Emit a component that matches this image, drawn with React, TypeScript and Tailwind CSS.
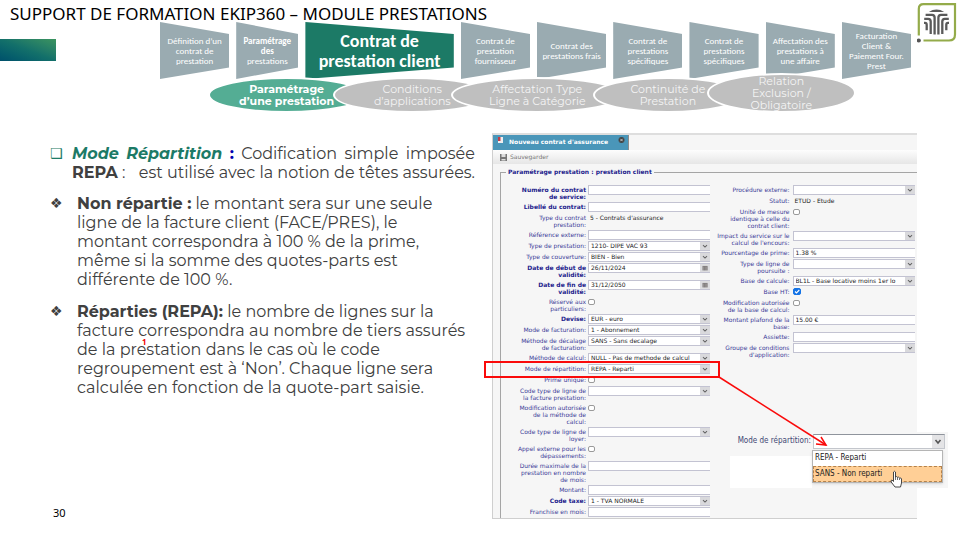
import React from "react";
import clsx from "clsx";

type Kind = "text" | "select" | "date" | "check" | "static";
type Field = {
  id: string;
  label: string;
  kind: Kind;
  value?: string;
  bold?: boolean;
  checked?: boolean;
  lines?: 1 | 2 | 3;
};

const MONT = "font-[Montserrat,Inter,'Open_Sans',sans-serif]";
const VERD = "font-['DejaVu_Sans',sans-serif]";

const leftFields: Field[] = [
  { id: "numero", label: "Numéro du contrat\nde service:", kind: "text", bold: true, lines: 2 },
  { id: "libelle", label: "Libellé du contrat:", kind: "text", bold: true },
  { id: "typecontrat", label: "Type du contrat\nprestation:", kind: "static", value: "5 - Contrats d'assurance", lines: 2 },
  { id: "reference", label: "Référence externe:", kind: "text" },
  { id: "typeprest", label: "Type de prestation:", kind: "select", value: "1210- DIPE VAC 93" },
  { id: "couverture", label: "Type de couverture:", kind: "select", value: "BIEN - Bien" },
  { id: "debut", label: "Date de début de\nvalidité:", kind: "date", value: "26/11/2024", bold: true, lines: 2 },
  { id: "fin", label: "Date de fin de\nvalidité:", kind: "date", value: "31/12/2050", bold: true, lines: 2 },
  { id: "reserve", label: "Réservé aux\nparticuliers:", kind: "check", lines: 2 },
  { id: "devise", label: "Devise:", kind: "select", value: "EUR - euro", bold: true },
  { id: "facturation", label: "Mode de facturation:", kind: "select", value: "1 - Abonnement" },
  { id: "decalage", label: "Méthode de décalage\nde facturation:", kind: "select", value: "SANS - Sans decalage", lines: 2 },
  { id: "calcul", label: "Méthode de calcul:", kind: "select", value: "NULL - Pas de methode de calcul" },
  { id: "repartition", label: "Mode de répartition:", kind: "select", value: "REPA - Reparti" },
  { id: "prime", label: "Prime unique:", kind: "check" },
  { id: "ligne", label: "Code type de ligne de\nla facture prestation:", kind: "select", lines: 2 },
  { id: "modif", label: "Modification autorisée\nde la méthode de\ncalcul:", kind: "check", lines: 3 },
  { id: "loyer", label: "Code type de ligne de\nloyer:", kind: "select", lines: 2 },
  { id: "appel", label: "Appel externe pour les\ndépassements:", kind: "check", lines: 2 },
  { id: "duree", label: "Durée maximale de la\nprestation en nombre\nde mois:", kind: "text", lines: 3 },
  { id: "montant", label: "Montant:", kind: "text" },
  { id: "taxe", label: "Code taxe:", kind: "select", value: "1 - TVA NORMALE", bold: true },
  { id: "franchise", label: "Franchise en mois:", kind: "text" },
];

const rightFields: Field[] = [
  { id: "procedure", label: "Procédure externe:", kind: "select" },
  { id: "statut", label: "Statut:", kind: "static", value: "ETUD - Etude" },
  { id: "unite", label: "Unité de mesure\nidentique à celle du\ncontrat client:", kind: "check", lines: 3 },
  { id: "impact", label: "Impact du service sur le\ncalcul de l'encours:", kind: "select", lines: 2 },
  { id: "pourcentage", label: "Pourcentage de prime:", kind: "text", value: "1.38 %" },
  { id: "poursuite", label: "Type de ligne de\npoursuite :", kind: "select", lines: 2 },
  { id: "base", label: "Base de calcule:", kind: "select", value: "BL1L - Base locative moins 1er lo" },
  { id: "baseht", label: "Base HT:", kind: "check", checked: true },
  { id: "modifbase", label: "Modification autorisée\nde la base de calcul:", kind: "check", lines: 2 },
  { id: "plafond", label: "Montant plafond de la\nbase:", kind: "text", value: "15.00 €", lines: 2 },
  { id: "assiette", label: "Assiette:", kind: "text" },
  { id: "groupe", label: "Groupe de conditions\nd'application:", kind: "select", lines: 2 },
];

function Chevron() {
  return (
    <svg viewBox="0 0 10 10" className="h-full w-[10px] shrink-0 bg-[#d9d9dc]" aria-hidden="true">
      <path d="M2.5 4 L5 6.3 L7.5 4" fill="none" stroke="#666" strokeWidth="1.4" />
    </svg>
  );
}

function CalendarMark() {
  return (
    <svg viewBox="0 0 10 10" className="h-full w-[10px] shrink-0 bg-[#dcdcdf]" aria-hidden="true">
      <path d="M2 3h6v5H2z" fill="#a9a6a6" />
      <path d="M2 3h6M2.5 3v5M4.3 3v5M6 3v5M7.7 3v5" stroke="#6e6a6a" strokeWidth=".8" />
    </svg>
  );
}

function Control({ field }: { field: Field }) {
  const text = "min-w-0 flex-1 bg-transparent pl-[2px] text-[6px] leading-[8px] text-[#1c1c1c] outline-none";
  if (field.kind === "static") {
    return <output id={field.id} className="block pl-[2px] pt-[1px] text-[6px] leading-[7px] whitespace-nowrap text-[#1c1c1c]">{field.value}</output>;
  }
  if (field.kind === "check") {
    return (
      <span className="flex h-[9px] items-center">
        <input
          id={field.id}
          type="checkbox"
          defaultChecked={field.checked}
          className="peer h-[6px] w-[7px] appearance-none rounded-[2px] border border-[#9a9a9a] bg-white checked:h-[7px] checked:w-[8px] checked:border-[#1473e6] checked:bg-[#1473e6]"
        />
        <svg viewBox="0 0 8 7" className="-ml-2 hidden h-[7px] w-2 peer-checked:block" aria-hidden="true">
          <path d="M2 3.5 L3.5 5 L6.3 2" fill="none" stroke="#fff" strokeWidth="1.1" />
        </svg>
      </span>
    );
  }
  return (
    <div className="flex h-[10px] border border-r-0 border-[#c3c3d2] bg-white">
      {field.kind === "select" ? (
        <select id={field.id} className={clsx(text, "appearance-none")} defaultValue={field.value ?? ""}>
          <option>{field.value ?? ""}</option>
        </select>
      ) : (
        <input id={field.id} type="text" className={text} defaultValue={field.value ?? ""} />
      )}
      {field.kind === "select" && <Chevron />}
      {field.kind === "date" && <CalendarMark />}
    </div>
  );
}

function Fields({ items, right }: { items: Field[]; right?: boolean }) {
  return (
    <div className={clsx("min-w-0", right ? "flex-[206] pr-[2px]" : "flex-[209]")}>
      {items.map((f) => (
        <div
          key={f.id}
          className={clsx(
            "grid",
            right ? "grid-cols-[80px_1fr] gap-x-[3px]" : "grid-cols-[85px_1fr] gap-x-[2px]",
            f.lines === 3 ? "h-6" : f.lines === 2 ? "h-[17px]" : "h-[11px]"
          )}
        >
          <label
            htmlFor={f.id}
            className={clsx(
              "flex flex-col items-end pt-[1px] text-[6px] leading-[7px] whitespace-nowrap",
              f.bold ? "font-bold text-[#22228c]" : "text-[#3c3c98]"
            )}
          >
            {f.label.split("\n").map((l) => (
              <span key={l}>{l}</span>
            ))}
          </label>
          <Control field={f} />
        </div>
      ))}
    </div>
  );
}

const steps = [
  { lines: ["Définition d’un", "contrat de", "prestation"], grow: "flex-[69]" },
  { lines: ["Paramétrage", "des", "prestations"], grow: "flex-[62]", boldCount: 2 },
  { lines: ["Contrat de", "prestation client"], grow: "flex-[148]", main: true },
  { lines: ["Contrat de", "prestation", "fournisseur"], grow: "flex-[69]" },
  { lines: ["Contrat des", "prestations frais"], grow: "flex-[69]" },
  { lines: ["Contrat de", "prestations", "spécifiques"], grow: "flex-[69]" },
  { lines: ["Contrat de", "prestations", "spécifiques"], grow: "flex-[69]" },
  { lines: ["Affectation des", "prestations à", "une affaire"], grow: "flex-[69]" },
  { lines: ["Facturation", "Client &", "Paiement Four.", "Prest"], grow: "flex-[69]" },
];

const topics = [
  { lines: ["Paramétrage", "d’une prestation"], cls: "flex-[157] h-[36px] bg-[#54ad94] font-bold text-white" },
  { lines: ["Conditions", "d’applications"], cls: "flex-[158] -ml-[32px] h-[36px] bg-[#bfbfbf] text-[#f4f4f4]" },
  { lines: ["Affectation Type", "Ligne à Catégorie"], cls: "flex-[172] -ml-[40px] h-[36px] bg-[#bfbfbf] text-[#f4f4f4]" },
  { lines: ["Continuité de", "Prestation"], cls: "flex-[149] -ml-[30px] h-[36px] bg-[#bfbfbf] text-[#f4f4f4]" },
  { lines: ["Relation", "Exclusion /", "Obligatoire"], cls: "flex-[149] -ml-[36px] h-[40px] bg-[#bfbfbf] text-[#f4f4f4]" },
];

function Logo() {
  return (
    <svg viewBox="0 0 40 40" className="mt-[3px] mr-[6px] h-10 w-10 shrink-0" role="img" aria-label="Logo">
      <path d="M1.8 32.5V6Q1.8 1.2 6.5 1.2H38V31.5Q38 37.5 32 37.5H6.5" fill="none" stroke="#94ab4a" strokeWidth="2.2" />
      <circle cx="1.8" cy="37.5" r="2.1" fill="#555" />
      <path d="M11.8 8.9Q19.5 4 27.2 8.9Z" fill="#5a5a5a" />
      <g fill="none" stroke="#5a5a5a" strokeWidth="2.3">
        <path d="M8.6 11.8H15Q17.6 11.8 17.6 14.6V31.5" />
        <path d="M30.4 11.8H24Q21.4 11.8 21.4 14.6V31.5" />
        <path d="M7.2 15.9H11.2Q13.7 15.9 13.7 18.6V31" />
        <path d="M31.8 15.9H27.8Q25.3 15.9 25.3 18.6V31" />
        <path d="M7 19.9H8Q9.7 19.9 9.7 21.8V27.2" />
        <path d="M32 19.9H31Q29.3 19.9 29.3 21.8V27.2" />
      </g>
    </svg>
  );
}

function ContractWindow() {
  return (
    <section className={clsx("relative border-t-2 border-b border-l border-t-[#dedede] border-b-[#cfcfcf] border-l-[#cfcfcf] bg-[#f6f6f6]", VERD)}>
      <div className="flex h-[15px]">
        <button type="button" className="flex w-[136px] items-start gap-[5px] border-r border-[#8c8c8c] bg-[#4a96b9] pl-[4px] pt-[2px] pr-[3px] text-[6px] leading-[10px] font-bold whitespace-nowrap text-white">
          <svg viewBox="0 0 7 7" className="h-[7px] w-[7px] shrink-0" aria-hidden="true">
            <path d="M1 0h5v6H1z" fill="#eee" />
            <path d="M1 0h2.5v4H1z" fill="#c43c46" />
          </svg>
          <span className="flex-1 text-left">Nouveau contrat d'assurance</span>
          <svg viewBox="0 0 7 7" className="h-[7px] w-[7px] shrink-0" aria-hidden="true">
            <circle cx="3.5" cy="3" r="3" fill="#444" />
            <path d="M2.3 1.8l2.4 2.4M4.7 1.8l-2.4 2.4" stroke="#ddd" strokeWidth=".8" />
          </svg>
        </button>
      </div>
      <div className="flex h-[14px] items-center bg-gradient-to-b from-[#fdfdfd] to-[#e6e6e6] pl-[7px]">
        <button type="button" className="flex items-center gap-[3px] text-[6px] leading-[8px] text-[#777]">
          <svg viewBox="0 0 7 7" className="h-[7px] w-[7px]" aria-hidden="true">
            <path d="M0 0h7v7H0z" fill="#777" />
            <path d="M1.5 0h4v3h-4zM1.5 5h4v1.5h-4z" fill="#ddd" />
          </svg>
          Sauvegarder
        </button>
      </div>
      <fieldset className="mt-1 ml-[7px] border-t border-l border-[#a5a5a5]">
        <legend className="ml-[5px] px-[2px] text-[6px] leading-[8px] font-bold text-[#22228c]">Paramétrage prestation : prestation client</legend>
        <div className="flex pt-[9px]">
          <Fields items={leftFields} />
          <Fields items={rightFields} right />
        </div>
      </fieldset>

      <div className="absolute top-[226px] -left-[9px] h-[17px] w-[236px] border-2 border-[#fa0a0a]" />

      <div className="absolute top-[297px] left-[236px] flex w-[219px] flex-col bg-[#f6f6f6] font-['DejaVu_Sans_Condensed','Noto_Sans',sans-serif]">
        <div className="flex h-[18px] items-center">
          <label htmlFor="choice" className="w-[84px] pr-[2px] text-right text-[8px] leading-[10px] whitespace-nowrap text-[#3f4674]">Mode de répartition:</label>
          <div className="flex h-[15px] w-[132px] border border-[#c4c7cd] border-t-[#8f949c] bg-white">
            <select id="choice" className="min-w-0 flex-1 appearance-none bg-white outline-none">
              <option></option>
            </select>
            <svg viewBox="0 0 12 13" className="h-full w-3 bg-[#e4e4e6]" aria-hidden="true">
              <path d="M3.5 5 L6 8 L8.5 5" fill="none" stroke="#555" strokeWidth="1.6" />
            </svg>
          </div>
        </div>
        <div className="flex h-[38px]">
          <div className="mt-[6px] ml-[1px] h-8 w-[82px] bg-white" />
          <ul role="listbox" aria-label="Mode de répartition" className="h-[33px] w-[131px] border border-[#b5b5b5] bg-white text-[8px] leading-[14px] text-[#222] shadow">
            <li role="option" aria-selected="false" className="h-[15px] pl-[2px]">REPA - Reparti</li>
            <li role="option" aria-selected="true" className="h-4 border border-dashed border-[#b5824a] bg-[#ffcf96] pl-[1px]">SANS - Non reparti</li>
          </ul>
        </div>
      </div>

      <svg viewBox="0 0 120 120" className="absolute top-[237px] left-[223px] h-[120px] w-[120px] overflow-visible" aria-hidden="true">
        <path d="M3 5 L110 73" stroke="#fa0a0a" strokeWidth="1.5" />
        <path d="M105 65 L110 73 L100 72" fill="none" stroke="#fa0a0a" strokeWidth="1.5" />
      </svg>
      <svg viewBox="0 0 14 18" className="absolute top-[335px] left-[397px] h-[18px] w-[14px]" aria-hidden="true">
        <path d="M3.5 10 V2 Q4.5 .5 5.5 2 V7 Q6.5 6 7.5 7.3 Q8.7 6.6 9.5 8 Q11 7.4 11.5 9 V13 L10.5 17 H5 L1.2 12 Q.5 10 2 10 L3.5 11.5Z" fill="#fff" stroke="#333" strokeWidth=".9" />
        <path d="M5.5 7V10M7.5 7.5V10M9.5 8.3V10" stroke="#333" strokeWidth=".7" />
      </svg>
    </section>
  );
}

export default function App() {
  return (
    <div className="min-h-screen bg-white">
      <header className="flex items-start gap-[6px]">
        <div className="min-w-0 flex-1">
          <h1 className="h-[22px] pl-[10px] pt-[3px] font-['Noto_Sans',sans-serif] text-[17px] leading-[22px] whitespace-nowrap text-black">
            SUPPORT DE FORMATION EKIP360 – MODULE PRESTATIONS
          </h1>
          <div className="flex items-start">
            <div className="mt-[17px] mr-[104px] h-[22px] w-14 bg-gradient-to-tr from-[#00506b] via-[#13706a] to-[#3c945f]" />
            <ol className="flex flex-1 gap-[7px] font-[Carlito,Lato,sans-serif]">
              {steps.map((s, i) => (
                <li
                  key={i}
                  className={clsx(
                    "flex h-[57px] min-w-0 flex-col items-center justify-center whitespace-nowrap text-white [clip-path:polygon(0_0,100%_21%,100%_80%,0_100%)]",
                    s.grow,
                    s.main ? "bg-[#1c7a66] text-lg leading-5 font-bold" : "bg-[#9aabb1] text-[9px] leading-[10px]"
                  )}
                >
                  {s.lines.map((l, k) => (
                    <span key={k} className={clsx(s.boldCount && k < s.boldCount && "font-bold")}>{l}</span>
                  ))}
                </li>
              ))}
            </ol>
          </div>
          <ul className={clsx("relative -mt-1 ml-[208px] mr-[55px] flex h-[38px] items-end text-[11px] leading-[12px]", MONT)}>
            {topics.map((t, i) => (
              <li key={i} className={clsx("flex flex-col items-center justify-center rounded-[50%] border-2 border-white whitespace-nowrap", t.cls)}>
                {t.lines.map((l) => (
                  <span key={l}>{l}</span>
                ))}
              </li>
            ))}
          </ul>
        </div>
        <Logo />
      </header>

      <main className="mt-5 grid grid-cols-2 gap-x-[17px] pr-[46px] pl-[50px]">
        <article className={clsx("relative flex flex-col text-base leading-[19px] text-[#404040]", MONT)}>
          <div className="mt-[11px] flex">
            <span className="w-[22px] shrink-0 font-['DejaVu_Sans',sans-serif] text-sm leading-[19px] font-bold text-[#1c7a66]">❑</span>
            <p className="flex-1">
              <span className="flex justify-between whitespace-nowrap">
                <b className="text-[#1c7a66] italic">Mode</b>
                <b className="text-[#1c7a66] italic">Répartition</b>
                <b className="text-[#0000b0]">:</b>
                <span>Codification</span>
                <span>simple</span>
                <span>imposée</span>
              </span>
              <span className="flex justify-between whitespace-nowrap">
                <span><b>REPA</b> :</span>
                <span>est utilisé avec la notion de têtes assurées.</span>
              </span>
            </p>
          </div>
          <div className="mt-3 flex">
            <span className="w-[27px] shrink-0 font-['DejaVu_Sans',sans-serif] text-sm leading-[19px]">❖</span>
            <p className="whitespace-nowrap">
              <b>Non répartie :</b> le montant sera sur une seule<br />
              ligne de la facture client (FACE/PRES), le<br />
              montant correspondra à 100 % de la prime,<br />
              même si la somme des quotes-parts est<br />
              différente de 100 %.
            </p>
          </div>
          <div className="mt-[13px] flex">
            <span className="w-[27px] shrink-0 font-['DejaVu_Sans',sans-serif] text-sm leading-[19px]">❖</span>
            <p className="whitespace-nowrap">
              <b>Réparties (REPA):</b> le nombre de lignes sur la<br />
              facture correspondra au nombre de tiers assurés<br />
              de la prestation dans le cas où le code<br />
              regroupement est à ‘Non’. Chaque ligne sera<br />
              calculée en fonction de la quote-part saisie.
            </p>
          </div>
          <span className="absolute top-[204px] left-[92px] font-['Noto_Sans',sans-serif] text-[8px] leading-[10px] font-bold text-[#f00000]">1</span>
          <p className="mt-auto pl-[3px] font-['Noto_Sans',sans-serif] text-[11px] leading-[12px] text-black">30</p>
        </article>
        <ContractWindow />
      </main>
    </div>
  );
}
